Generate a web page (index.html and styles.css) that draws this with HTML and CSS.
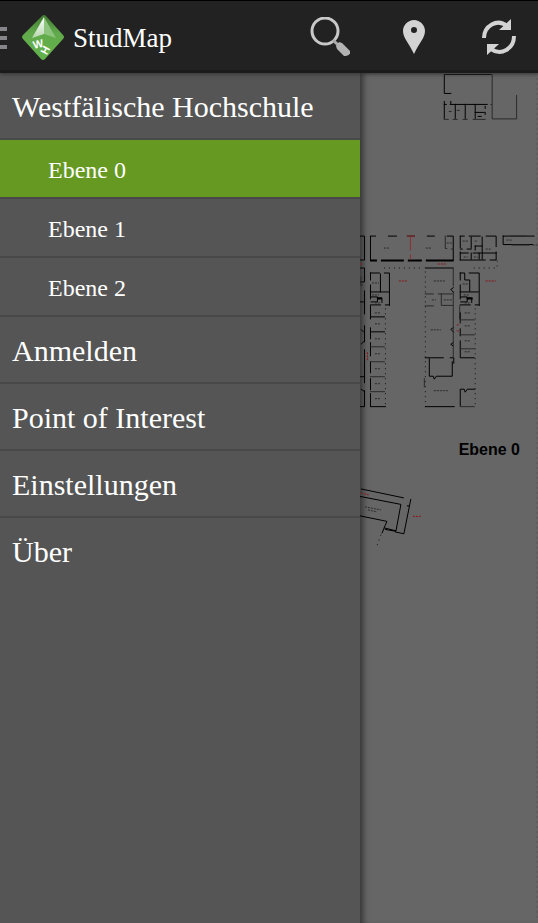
FILE: index.html
```html
<!DOCTYPE html>
<html lang="de">
<head>
<meta charset="utf-8">
<meta name="viewport" content="width=device-width, initial-scale=1">
<title>StudMap</title>
<link rel="stylesheet" href="styles.css">
</head>
<body>
<header class="bar">
  <button class="home" aria-label="Navigation">
    <svg class="grip" width="7" height="24" viewBox="0 0 7 24"><path fill="#85858a" d="M0 1h7v4H0zM0 10h7v4H0zM0 19h7v4H0z"/></svg>
    <svg class="logo" width="44" height="46" viewBox="0 0 44 46">
      <defs>
        <linearGradient id="leaf" x1="0" y1="0" x2="0" y2="1"><stop offset="0" stop-color="#3f7a30"/><stop offset=".4" stop-color="#62aa4c"/><stop offset="1" stop-color="#62b34b"/></linearGradient>
        <linearGradient id="needle" x1="0" y1="0" x2="0" y2="1"><stop offset="0" stop-color="#fff"/><stop offset="1" stop-color="#b5d6ac"/></linearGradient>
      </defs>
      <path fill="url(#leaf)" d="M20 1Q22-1 24 1L41 20Q43 22 41 24L23 44Q21 46 19 44L1 24Q-1 22 1 20Z"/>
      <path fill="url(#needle)" d="M22 2 10 23 22 19Z"/>
      <path fill="#8cc37d" d="M22 2 34 23 22 19Z"/>
      <g class="logo-text"><text transform="translate(12 34) rotate(-14)">W</text><text transform="translate(19 34) rotate(-62) translate(-3 8)">H</text></g>
    </svg>
    <span>StudMap</span>
  </button>
  <nav class="actions" aria-label="Aktionen">
    <button aria-label="Suchen"><svg width="42" height="42" viewBox="0 0 42 42"><circle cx="17" cy="14" r="13" fill="none" stroke="#c8c8c8" stroke-width="3"/><path d="m25 23 5 5" stroke="#aaa" stroke-width="3"/><path fill="#b3b3b3" d="m28 29 3-4 3 1 8 8q1 4-4 5h-2l-7-7Z"/></svg></button>
    <button aria-label="Position"><svg width="42" height="42" viewBox="0 0 42 42"><path fill="#d3d3d3" fill-rule="evenodd" d="M21 3C15 3 10 8 10 14c0 7 6 12 11 23 5-11 11-16 11-23C32 8 27 3 21 3Zm0 7a3 3 0 1 1 0 6 3 3 0 0 1 0-6Z"/></svg></button>
    <button aria-label="Aktualisieren"><svg width="42" height="42" viewBox="0 0 42 42"><g fill="none" stroke="#d3d3d3" stroke-width="4"><path d="M6 21C6 9 19 1 29 9M36 19C36 32 23 39 13 32"/></g><path fill="#d3d3d3" d="M33 2v11H21ZM9 38V27h12Z"/></svg></button>
  </nav>
</header>
<main class="content">
  <nav class="drawer" aria-label="Menü">
    <a href="#wh">Westfälische Hochschule</a>
    <a class="level active" href="#e0">Ebene 0</a>
    <a class="level" href="#e1">Ebene 1</a>
    <a class="level" href="#e2">Ebene 2</a>
    <a href="#login">Anmelden</a>
    <a href="#poi">Point of Interest</a>
    <a href="#settings">Einstellungen</a>
    <a href="#about">Über</a>
  </nav>
  <section class="map" aria-label="Karte">
    <svg viewBox="360 73 178 850">
      <!-- north building -->
      <path class="wall" d="M444.500 93.500V74.500H492M444.500 93.500h7M444.500 101v18M451 101v3M444 104.500h3M450 104.500h38M491 104.500h1M455.500 104v15M465.500 104v15M475.500 104v15M475 112.500h10M478 116.500h4M485.500 106v3M485.500 112v3"/>
      <path class="thin" d="M492.500 74v45h24.500v-24M444 119.500h5M453 119.500h5M463 119.500h5M473 119.500h13M457 110.500h3M449 111.500h3"/>
      <!-- upper wings -->
      <path class="wall" d="M360 236.500h4.500v24H360M370.500 236.500v24M370 236.500h6M388 236.500h9M407 236.500h8M427 236.500h8M447 236.500h6.500v24M460.500 236.500v12M460.500 252v9M460 236.500h5M469 236.500h12M486 236.500h10.500v11M496.500 252v8.500H490M460 260.500h26M482.500 237v23M471.500 237v12M460 249.500h3M467 249.500h5M475 246.500h8M475.500 246v5M460 253.500h9M473 253.500h24M471.500 253v7M479.500 253v7M535 236.500h-32M503.500 236v9h30"/>
      <path class="heavy" d="M370 261h7M381 261h23M408 261h14M426 261h28"/>
      <path class="thin" d="M445.500 236v13h2M451 249.500h3M511 236.500h16M512 245.500h18"/>
      <path class="wall" d="M360 268.500h4.500v14H360M364.500 291v24M360 302.500h4M370.500 273v8M370.500 285v15M370 273.500h10M384 273.500h5.500v33M380.500 274v19M370 292.500h19M370.500 297.500h7v5h-7M377 298.500h5v5M370 305.500h11M385 305.500h5M425 268.500h29M460.500 273v8M460.500 285v15M460 273.500h5v7h5v12M469 273.500h10.500v33M460 292.500h19M460.500 297.500h7v5h-7M467 298.500h5v5M460 305.500h11M475 305.500h5"/>
      <path class="heavy" d="M377 299h5M467 299h6"/>
      <path class="thin" d="M453.500 269v18M453.500 292v22M425 294.500h9M438 294.500h15M441.500 294v12h12M425 306.500h9M460 306v14M360 285.500h3M361 277v8"/>
      <path class="door" d="M384 268.500h36M474 268.500h24M497.500 261v8M425.500 272v134M385.500 309v97M475.500 309v97"/>
      <!-- office rows -->
      <path class="wall" d="M370.500 306v14M370.500 328v12M370.500 343v14M370.500 362v12M370.500 379v12M370.500 394v13M370 317.500h15M370 332.500h15M370 407.500h16M364.500 326v17M364.500 350v34M364.500 391v16.500H360M360 377.500h4M460.500 313v11M460.500 329v8M460.500 341v17.500H475M425 358.500h19M450 358.500h4v6M429.500 359v18h4l1 3 2-3h16M452.500 377v-15M460.500 407v-17h4l1 3 2-3h8M425 407.500h30M361 330l3 3M361 345l3-3M361 390l3 2M454 328l-3 2 3 3M454 343l-3 2 3 2M454 288l-3 2 3 3"/>
      <path class="thin" d="M370 347.500h15M370 362.500h15M370 377.500h15M370 392.500h15M460 320.500h15M460 335.500h15M460 349.500h15M460 407.500h15M424.500 379v9M453.500 314v44"/>
      <path class="label" d="M384 248.500h6M426 248.500h6M447 243.500h5M463 241.500h6M475 241.500h3M486 249.500h6M464 257.500h4M474 257.500h4M507 240.500h6M533 245.500h5M434 281.500h12M372 283.500h7M372 295.500h7M375 303.500h6M463 284.500h5M464 295.500h6M465 303.500h6M432 300.500h4M444 300.500h9M375 313.500h5M375 324.500h5M375 339.500h5M375 354.500h5M375 369.500h5M375 384.500h5M375 399.500h5M465 313.500h5M465 326.500h5M465 341.500h5M465 352.500h5M431 330.500h10M434 391.500h14"/>
      <path class="red-line" d="M410.500 237v14M410.500 255v5M407 236.500h8"/>
      <path class="red" d="M438 264.500h9M399 281.500h8M486 281.500h10M360 264.500h2M367.500 353v8M457 325.500h3M457 331.500h3"/>
      <!-- south-west wing -->
      <path class="wall" d="m361 490 43 9M360 497.500l41 8-5 27-11-2M360 517l27 5.500-3 7-2 5M384 529l12 3M395 533l9 2 7-35M407 507h3"/>
      <path class="door" d="m381 536-4 11"/>
      <path class="label" d="m365 508 16 3M368 511l9 2"/>
      <path class="red" d="m361 494 8 2M413 517.500h8"/>
      <path class="edge" d="M537.500 73v850"/>
      <text class="plan-title" x="459" y="456">Ebene 0</text>
    </svg>
  </section>
</main>
</body>
</html>
```
FILE: styles.css
```css
* { box-sizing: border-box; }
body { margin: 0; min-height: 100vh; display: flex; flex-direction: column; background: #666; color: #fff; font-family: "Liberation Serif", serif; }
button { border: 0; padding: 0; background: none; color: inherit; font: inherit; }
svg { display: block; }
.bar { position: relative; display: flex; justify-content: space-between; align-items: center; height: 73px; padding-top: 4px; background: #222; border-top: 1px solid #000; border-bottom: 3px solid #1b1b1b; box-shadow: 0 1px 4px #333; }
.home { display: flex; align-items: center; font-size: 27px; }
.home span { padding-top: 2px; }
.logo { margin: 0 7px 0 15px; }
.logo-text { fill: #fff; font: bold 11px "Liberation Sans", sans-serif; }
.actions { display: flex; gap: 43px; padding-right: 18px; }
.content { flex: 1; display: flex; }
.drawer { width: 67%; background: #555; }
.drawer a { display: block; padding: 2px 12px 0; border-bottom: 2px solid #494949; color: #fff; font-size: 30px; line-height: 63px; text-decoration: none; }
.drawer .level { padding: 4px 12px 0 48px; font-size: 24px; line-height: 53px; }
.drawer .active { background: #669922; }
.drawer a:last-child { border-bottom: 0; }
.map { flex: 1; box-shadow: inset 7px 0 6px -4px #333; }
.map svg { width: 100%; }
.map path { fill: none; stroke: #000; }
.map .heavy { stroke-width: 2; }
.map .thin { stroke: #2a2a2a; }
.map .door { stroke: #111; stroke-dasharray: 1 4; }
.map .label { stroke: #2a2a2a; stroke-dasharray: 2 1; }
.map .red { stroke: #8c1519; stroke-dasharray: 2 1; }
.map .red-line { stroke: #932b2e; }
.map .edge { stroke: #585858; stroke-dasharray: 2 3; }
.plan-title { font: bold 16px "Liberation Sans", sans-serif; }
```
